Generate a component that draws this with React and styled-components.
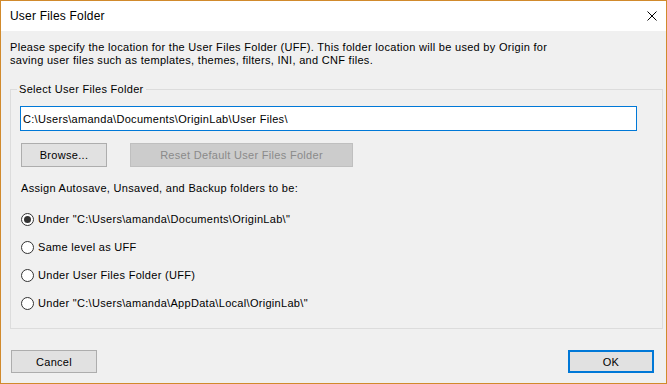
import React from "react";
import styled, { createGlobalStyle } from "styled-components";

const GlobalStyle = createGlobalStyle`
  html, body {
    margin: 0;
    padding: 0;
    background: #ffffff;
  }
  body {
    font-family: "Liberation Sans", Arial, sans-serif;
    font-size: 11px;
    letter-spacing: 0.3px;
    color: #000;
  }
  * {
    box-sizing: border-box;
  }
`;

const Window = styled.div`
  width: 667px;
  height: 384px;
  border: 1px solid #d18a2c;
  background: #f0f0f0;
  display: flex;
  flex-direction: column;
`;

const TitleBar = styled.div`
  height: 30px;
  flex: none;
  background: #ffffff;
  display: flex;
  align-items: center;
  justify-content: space-between;
  padding: 0 9px 0 9px;
  font-size: 12px;
  letter-spacing: 0.2px;
`;

const CloseButton = styled.div`
  width: 10px;
  height: 10px;
  display: flex;
`;

const Body = styled.div`
  flex: 1;
  display: flex;
  flex-direction: column;
  padding: 10px 3px 0 9px;
`;

const Description = styled.p`
  margin: 0;
  line-height: 13px;
  width: 548px;
`;

const Group = styled.fieldset`
  margin: 16px 0 0 0;
  padding: 10px 0 11px 9px;
  border: 1px solid #dcdcdc;
  display: flex;
  flex-direction: column;
`;

const Legend = styled.legend`
  padding: 0 2px;
  margin-left: -3px;
  line-height: 13px;
`;

const PathInput = styled.div`
  width: 617px;
  height: 25px;
  border: 1px solid #0078d7;
  background: #ffffff;
  padding: 0 2px;
  display: flex;
  align-items: center;
`;

const ButtonRow = styled.div`
  display: flex;
  gap: 23px;
  margin-top: 12px;
  padding-left: 1px;
`;

const Button = styled.div`
  width: ${(p) => p.$w || 86}px;
  height: ${(p) => p.$h || 24}px;
  display: flex;
  align-items: center;
  justify-content: center;
  background: ${(p) => (p.$disabled ? "#cccccc" : "#e1e1e1")};
  border: ${(p) =>
    p.$default ? "2px solid #0078d7" : p.$disabled ? "1px solid #bfbfbf" : "1px solid #adadad"};
  color: ${(p) => (p.$disabled ? "#8a8a8a" : "#000")};
`;

const AssignLabel = styled.div`
  margin-top: 15px;
  padding-left: 1px;
  line-height: 13px;
`;

const RadioList = styled.div`
  margin-top: 10px;
  display: flex;
  flex-direction: column;
`;

const RadioRow = styled.div`
  height: 28px;
  display: flex;
  align-items: center;
  gap: 4px;
  padding-left: 1px;
`;

const RadioCircle = styled.span`
  width: 13px;
  height: 13px;
  border-radius: 50%;
  border: 1px solid #333333;
  background: #ffffff;
  display: flex;
  align-items: center;
  justify-content: center;

  &::after {
    content: "";
    width: 7px;
    height: 7px;
    border-radius: 50%;
    background: #333333;
    display: ${(p) => (p.$checked ? "block" : "none")};
  }
`;

const Footer = styled.div`
  display: flex;
  justify-content: space-between;
  margin-top: 21px;
  padding: 0 9px 0 1px;
`;

const options = [
  'Under "C:\\Users\\amanda\\Documents\\OriginLab\\"',
  "Same level as UFF",
  "Under User Files Folder (UFF)",
  'Under "C:\\Users\\amanda\\AppData\\Local\\OriginLab\\"',
];

export default function App() {
  return (
    <>
      <GlobalStyle />
      <Window>
        <TitleBar>
          <span>User Files Folder</span>
          <CloseButton>
            <svg width="10" height="10" viewBox="0 0 10 10">
              <path d="M0.5 0.5 L9.5 9.5 M9.5 0.5 L0.5 9.5" stroke="#000" strokeWidth="1" fill="none" />
            </svg>
          </CloseButton>
        </TitleBar>
        <Body>
          <Description>
            Please specify the location for the User Files Folder (UFF). This folder location will be used by
            Origin for saving user files such as templates, themes, filters, INI, and CNF files.
          </Description>
          <Group>
            <Legend>Select User Files Folder</Legend>
            <PathInput>C:\Users\amanda\Documents\OriginLab\User Files\</PathInput>
            <ButtonRow>
              <Button>Browse...</Button>
              <Button $w={223} $disabled>
                Reset Default User Files Folder
              </Button>
            </ButtonRow>
            <AssignLabel>Assign Autosave, Unsaved, and Backup folders to be:</AssignLabel>
            <RadioList>
              {options.map((o, i) => (
                <RadioRow key={o}>
                  <RadioCircle $checked={i === 0} />
                  <span>{o}</span>
                </RadioRow>
              ))}
            </RadioList>
          </Group>
          <Footer>
            <Button $h={23}>Cancel</Button>
            <Button $h={23} $default>
              OK
            </Button>
          </Footer>
        </Body>
      </Window>
    </>
  );
}
